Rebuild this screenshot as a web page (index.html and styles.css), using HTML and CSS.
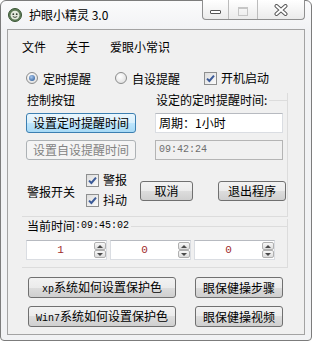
FILE: index.html
```html
<!DOCTYPE html>
<html lang="zh-CN">
<head>
  <meta charset="UTF-8">
  <title>护眼小精灵 3.0</title>
  <link rel="stylesheet" href="styles.css">
</head>
<body>
  <div class="window">
    <div class="titlebar">
      <svg class="app-icon" width="14" height="14" viewBox="0 0 14 14">
        <circle cx="7" cy="7" r="6.5" fill="#5f7d58" stroke="#3b5636"/>
        <circle cx="7" cy="7.2" r="4.4" fill="#e3eadc"/>
        <circle cx="5.3" cy="6.2" r="0.9" fill="#2f3a2c"/>
        <circle cx="8.7" cy="6.2" r="0.9" fill="#2f3a2c"/>
        <path d="M4.8 8.5 Q7 10.4 9.2 8.5" stroke="#2f3a2c" stroke-width="0.9" fill="none"/>
      </svg>
      <span class="title">护眼小精灵 3.0</span>
      <div class="caption">
        <span class="cbtn min"><i></i></span>
        <span class="cbtn max"><i></i></span>
        <span class="cbtn close">
          <svg width="14" height="12" viewBox="0 0 14 12">
            <path d="M2.5 2 L11.5 10 M11.5 2 L2.5 10" stroke="#5a5a5a" stroke-width="4" stroke-linecap="round"/>
            <path d="M2.5 2 L11.5 10 M11.5 2 L2.5 10" stroke="#fff" stroke-width="2" stroke-linecap="round"/>
          </svg>
        </span>
      </div>
    </div>

    <div class="client">
      <div class="menu">
        <span>文件</span>
        <span>关于</span>
        <span>爱眼小常识</span>
      </div>

      <div class="opts">
        <span class="radio on"></span><span class="opt-txt">定时提醒</span>
        <span class="radio r2"></span><span class="opt-txt">自设提醒</span>
        <span class="check c3"><svg width="11" height="11" viewBox="0 0 11 11"><path d="M2 5.6 L4.4 8 L9 2.6" stroke="#3b5a98" stroke-width="2" fill="none"/></svg></span><span class="chk-txt">开机启动</span>
      </div>

      <div class="grp">
        <div class="cols">
          <div class="col-l">
            <div class="gtitle">控制按钮</div>
            <button class="btn focus b1">设置定时提醒时间</button>
            <button class="btn b2" disabled>设置自设提醒时间</button>
          </div>
          <div class="col-r">
            <div class="gtitle line">设定的定时提醒时间:</div>
            <div class="tbox">周期：1小时</div>
            <div class="tbox off">09:42:24</div>
          </div>
        </div>

        <div class="alarm">
          <span class="alarm-lbl">警报开关</span>
          <div class="checks">
            <div class="chk-row"><span class="check"><svg width="11" height="11" viewBox="0 0 11 11"><path d="M2 5.6 L4.4 8 L9 2.6" stroke="#3b5a98" stroke-width="2" fill="none"/></svg></span><span class="chk-txt">警报</span></div>
            <div class="chk-row"><span class="check"><svg width="11" height="11" viewBox="0 0 11 11"><path d="M2 5.6 L4.4 8 L9 2.6" stroke="#3b5a98" stroke-width="2" fill="none"/></svg></span><span class="chk-txt">抖动</span></div>
          </div>
          <button class="btn cancel">取消</button>
          <button class="btn quit">退出程序</button>
        </div>
      </div>

      <div class="grp now">
        <div class="gtitle line">当前时间<span class="mono">:09:45:02</span></div>
        <div class="spins">
          <div class="spin"><span class="val">1</span><span class="arrows"><i class="up"></i><i class="down"></i></span></div>
          <div class="spin"><span class="val">0</span><span class="arrows"><i class="up"></i><i class="down"></i></span></div>
          <div class="spin"><span class="val">0</span><span class="arrows"><i class="up"></i><i class="down"></i></span></div>
        </div>
      </div>

      <div class="links">
        <button class="btn"><span class="mono">xp</span>系统如何设置保护色</button>
        <button class="btn">眼保健操步骤</button>
        <button class="btn"><span class="mono">Win7</span>系统如何设置保护色</button>
        <button class="btn">眼保健操视频</button>
      </div>
    </div>
  </div>
</body>
</html>
```

FILE: styles.css
```css
* { box-sizing: border-box; }
body { margin: 0; background: #fff; font-family: "Noto Sans CJK SC", sans-serif; font-size: 12px; color: #000; }
.mono { font-family: "Liberation Mono", monospace; font-size: 10px; }

/* fenetre */
.window { width: 312px; height: 341px; border: 1px solid #7c7c7c; border-radius: 6px 6px 4px 4px; background: linear-gradient(#fbfbfc, #f1f2f4 30px, #f1f2f4); }
.titlebar { height: 28px; display: flex; align-items: center; }
.app-icon { margin-left: 7px; }
.title { margin-left: 7px; line-height: 14px; }
.caption { display: flex; align-self: flex-start; margin: -1px 6px 0 auto; height: 20px; border: 1px solid #8f8f8f; border-top: none; border-radius: 0 0 4px 4px; overflow: hidden; background: linear-gradient(#ffffff, #ebebeb); }
.cbtn { display: flex; justify-content: center; height: 100%; }
.cbtn + .cbtn { border-left: 1px solid #bcbcbc; }
.cbtn.min { width: 25px; padding-top: 10px; }
.cbtn.min i { width: 11px; height: 4px; border: 1px solid #555; border-radius: 1px; background: #fff; }
.cbtn.max { width: 29px; padding-top: 7px; }
.cbtn.max i { width: 10px; height: 9px; border: 1px solid #c6c6c6; border-top-width: 2px; }
.cbtn.close { width: 47px; padding-top: 4px; }

/* zone client */
.client { margin: 0 6px; height: 306px; border: 1px solid #a3a3a3; background: #f0f0f0; }
.menu { display: flex; height: 26px; padding: 8px 0 0 14px; line-height: 18px; }
.menu span { margin-right: 20px; }

.opts { display: flex; align-items: center; height: 16px; margin-top: 14px; padding-left: 18px; white-space: nowrap; }
.radio { flex: none; width: 12px; height: 12px; border: 1px solid #8b8c8c; border-radius: 50%; background: radial-gradient(circle at 40% 35%, #fff, #d9d9d9); display: flex; align-items: center; justify-content: center; margin-right: 5px; }
.radio.on::after { content: ''; width: 6px; height: 6px; border-radius: 50%; background: radial-gradient(circle at 40% 35%, #a9c8ee, #1e4f8e); }
.radio.r2 { margin-left: 24px; }
.check { flex: none; width: 13px; height: 13px; border: 1px solid #8e8f8f; background: linear-gradient(135deg, #dcdcdc, #fbfbfb); display: flex; align-items: center; justify-content: center; }
.check.c3 { margin-left: 24px; }
.chk-txt { margin-left: 4px; line-height: 16px; white-space: nowrap; }

/* cadres */
.grp { width: 266px; margin: 14px 0 0 14px; padding: 0 4px 6px 4px; border-right: 1px solid #dcdcdc; border-bottom: 1px solid #dcdcdc; }
.cols { display: flex; gap: 19px; margin-top: -7px; }
.col-l { width: 110px; display: flex; flex-direction: column; }
.col-r { width: 128px; display: flex; flex-direction: column; }
.gtitle { display: flex; height: 14px; line-height: 14px; padding-left: 1px; white-space: nowrap; }
.gtitle.line::after { content: ''; flex: 1; height: 1px; margin: 7px -4px 0 2px; background: #dcdcdc; }

.btn { flex: none; height: 20px; padding: 0; border: 1px solid #707070; border-radius: 3px; background: linear-gradient(#f2f2f2 0, #ebebeb 50%, #dddddd 50%, #cfcfcf 100%); font-family: inherit; font-size: 12px; line-height: 18px; color: #000; white-space: nowrap; }
.btn.focus { border-color: #3c7fb1; background: linear-gradient(#eaf6fd 0, #d9f0fc 50%, #bee6fd 50%, #a7d9f5 100%); }
.btn:disabled { border-color: #adb2b5; background: #f4f4f4; color: #838383; }
.b1 { margin-top: 6px; }
.b2 { margin-top: 7px; }

.tbox { height: 20px; margin-top: 6px; padding-left: 3px; border: 1px solid #dadde2; border-top-color: #b7bac0; background: #fff; line-height: 18px; }
.tbox.off { margin-top: 7px; border-color: #b4b4b4; background: #f0f0f0; color: #6e6e6e; font-family: "Liberation Mono", monospace; font-size: 10px; }

.alarm { display: flex; align-items: center; height: 40px; margin-top: 10px; padding-left: 1px; }
.alarm-lbl { flex: none; width: 48px; margin-top: 4px; line-height: 14px; white-space: nowrap; }
.checks { flex: none; width: 41px; margin-left: 11px; display: flex; flex-direction: column; }
.chk-row { display: flex; align-items: center; height: 20px; }
.cancel { width: 53px; margin: 2px 0 0 13px; }
.quit { width: 68px; margin: 2px 0 0 25px; }

.grp.now { margin-top: 9px; padding-bottom: 7px; }
.grp.now .gtitle { margin-top: -7px; }
.spins { display: flex; gap: 3px; margin-top: 7px; }
.spin { display: flex; width: 81px; height: 20px; border: 1px solid #dadde2; border-top-color: #b7bac0; background: #fff; }
.val { flex: 1; text-align: center; line-height: 18px; color: #a02a2a; font-family: "Liberation Mono", monospace; font-size: 11px; }
.arrows { width: 12px; display: flex; flex-direction: column; margin: 1px 0; }
.arrows i { flex: 1; display: flex; align-items: center; justify-content: center; border: 1px solid #b0b0b0; border-radius: 2px; background: linear-gradient(#f8f8f8, #dcdcdc); }
.arrows i::after { content: ''; border: 3px solid transparent; }
.arrows .up::after { border-bottom-color: #4a4a4a; border-top-width: 0; }
.arrows .down::after { border-top-color: #4a4a4a; border-bottom-width: 0; }

.links { display: grid; grid-template-columns: 148px 88px; column-gap: 19px; row-gap: 8px; margin: 9px 0 0 20px; }
.links .btn { height: 21px; }
```
